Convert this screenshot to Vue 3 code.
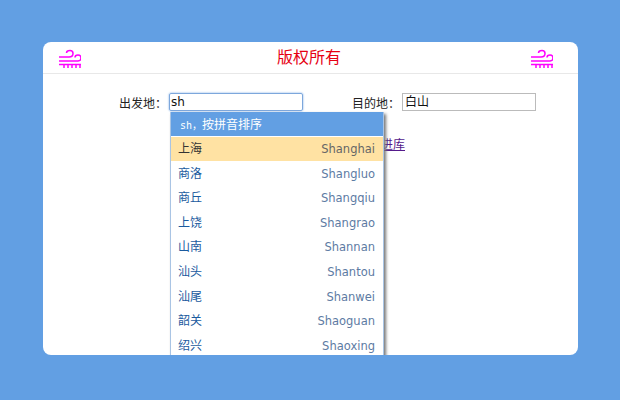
<script setup>
const cities = [
  ['上海', 'Shanghai'], ['商洛', 'Shangluo'], ['商丘', 'Shangqiu'], ['上饶', 'Shangrao'], ['山南', 'Shannan'],
  ['汕头', 'Shantou'], ['汕尾', 'Shanwei'], ['韶关', 'Shaoguan'], ['绍兴', 'Shaoxing'],
]
</script>

<template>
  <div class="page">
    <div class="card">
      <header class="head">
        <svg class="wind" viewBox="0 0 22 20" fill="none" stroke="#f0f" stroke-width="1.500">
          <path d="M0 8h10c3 0 4-2 4-3.500 0-2-1.500-3-3-3-2 0-3.500 1-3.500 2.500" />
          <path d="M0 12h19c2 0 3-1.500 3-3 0-2-1.500-3-3-3-2 0-3 1-3 2.500" />
          <path d="M0 15.500h22" />
          <path d="M5 16v3M9 16v3M13 16v3M17 16v3M21 16v3" />
        </svg>
        <span class="title">版权所有</span>
        <svg class="wind" viewBox="0 0 22 20" fill="none" stroke="#f0f" stroke-width="1.500">
          <path d="M0 8h10c3 0 4-2 4-3.500 0-2-1.500-3-3-3-2 0-3.500 1-3.500 2.500" />
          <path d="M0 12h19c2 0 3-1.500 3-3 0-2-1.500-3-3-3-2 0-3 1-3 2.500" />
          <path d="M0 15.500h22" />
          <path d="M5 16v3M9 16v3M13 16v3M17 16v3M21 16v3" />
        </svg>
      </header>
      <div class="form">
        <label class="field">
          <span class="lab">出发地：</span>
          <span class="box focus">sh</span>
        </label>
        <label class="field second">
          <span class="lab">目的地：</span>
          <span class="box">白山</span>
        </label>
      </div>
      <a class="link">进库</a>
      <div class="drop">
        <div class="hint"><span class="q">sh，</span>按拼音排序</div>
        <div v-for="(c, i) in cities" :key="c[1]" class="row" :class="{ on: i === 0 }">
          <span>{{ c[0] }}</span>
          <span class="py">{{ c[1] }}</span>
        </div>
      </div>
    </div>
  </div>
</template>

<style>
html, body { margin: 0; background: #629fe3; }
</style>

<style scoped>
.page {
  width: 620px;
  height: 400px;
  box-sizing: border-box;
  padding: 42px 42px 45px 43px;
  background: #629fe3;
  font-family: "Liberation Sans", "Noto Sans CJK SC", sans-serif;
}
.card {
  position: relative;
  height: 313px;
  background: #fff;
  border-radius: 8px;
  overflow: hidden;
}
.head {
  height: 32px;
  box-sizing: border-box;
  border-bottom: 1px solid #e8e8e8;
  padding: 0 25px 0 16px;
  display: flex;
  justify-content: space-between;
  align-items: center;
}
.wind { width: 22px; height: 20px; margin-top: 3px; }
.title { color: #e60012; font-size: 16px; line-height: 30px; margin-left: 6px; }
.form {
  display: flex;
  padding: 19px 0 0 76px;
  font-size: 12px;
  color: #222;
}
.field { display: flex; align-items: center; }
.second { margin-left: 49px; }
.lab { width: 50px; }
.box {
  width: 130px;
  height: 16px;
  box-sizing: content-box;
  border: 1px solid #bbb;
  padding-left: 2px;
  font-family: "DejaVu Sans", "Noto Sans CJK SC", sans-serif;
  font-size: 12px;
  line-height: 16px;
  color: #111;
}
.focus {
  border-color: #7da7dc;
  box-shadow: 0 0 2px #6a9fe0;
  border-radius: 2px;
  padding-left: 1px;
  width: 131px;
}
.link {
  position: absolute;
  left: 338px;
  top: 93px;
  font-size: 12px;
  color: #551a8b;
  text-decoration: underline;
}
.drop {
  position: absolute;
  left: 127px;
  top: 70px;
  width: 212px;
  border-left: 1px solid #a9c4e4;
  border-right: 1px solid #a9c4e4;
  background: #fff;
  box-shadow: 2px 2px 3px #777;
}
.hint {
  height: 24px;
  background: #629fe3;
  color: #fff;
  font-size: 12px;
  line-height: 26px;
  padding-left: 9px;
  border-bottom: 1px solid #fff;
}
.q { font-family: "DejaVu Sans Mono", "Noto Sans CJK SC", monospace; font-size: 10px; }
.row {
  box-sizing: border-box;
  height: 24.600px;
  line-height: 24.600px;
  display: flex;
  justify-content: space-between;
  padding: 0 8px 0 7px;
  font-size: 12px;
  color: #1a5a9e;
}
.py { color: #5d7ba3; font-family: "DejaVu Sans", sans-serif; font-size: 11.500px; }
.on { background: #ffe2a3; color: #333; border-bottom: 1px solid #fff; }
.on .py { color: #666; }
</style>
